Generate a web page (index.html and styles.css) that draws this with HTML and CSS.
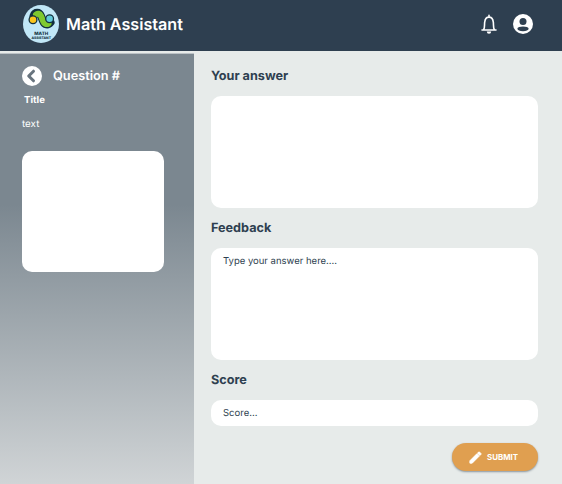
FILE: index.html
```html
<!DOCTYPE html>
<html lang="en">
<head>
<meta charset="utf-8">
<title>Math Assistant</title>
<link rel="stylesheet" href="styles.css">
</head>
<body>
<header class="topbar">
  <svg class="logo" viewBox="0 0 36 38" role="img">
    <ellipse cx="18" cy="19" rx="18" ry="19" fill="#c1e7f7"/>
    <path d="M10.5 11C12 6.8 16.3 6.8 18 11L20 16C21.5 20 25 20.5 27.5 17.5" fill="none" stroke="#12303e" stroke-width="8" stroke-linecap="round"/>
    <path d="M13 9.5C14.5 8 16.8 8.5 18 11L20 16C21 18.7 23.3 19.7 25.5 18.5" fill="none" stroke="#7fc92f" stroke-width="6" stroke-linecap="round"/>
    <circle cx="10" cy="14.8" r="3.9" fill="#fbc51b" stroke="#12303e" stroke-width="1.3"/>
    <circle cx="26.6" cy="13.7" r="3.9" fill="#62cbdc" stroke="#12303e" stroke-width="1.3"/>
    <text x="18.2" y="29.6" class="logo-math" text-anchor="middle" textLength="14">MATH</text>
    <text x="18.2" y="34.2" class="logo-sub" text-anchor="middle" textLength="19.5">ASSISTANT</text>
  </svg>
  <h1 class="brand">Math Assistant</h1>
  <svg class="bell" viewBox="0 0 16 20">
    <path d="M1 16H15M2.7 15.5C3.9 13.5 3.3 10.8 3.7 8.2C4 5 5.6 3.1 8 3.1S12 5 12.3 8.2C12.7 10.8 12.1 13.5 13.3 15.5M8 2.8V1.2" fill="none" stroke="#fff" stroke-width="1.6" stroke-linecap="round"/>
    <path d="M5.8 17.6H10.2A2.2 2.2 0 0 1 5.8 17.6Z" fill="#fff"/>
  </svg>
  <svg class="user" viewBox="0 0 20 20">
    <circle cx="10" cy="10" r="10" fill="#fff"/>
    <circle cx="10" cy="7.5" r="3.5" fill="#2e3f50"/>
    <ellipse cx="10" cy="14.8" rx="5.6" ry="2.4" fill="#2e3f50"/>
  </svg>
</header>
<div class="layout">
  <aside class="sidebar">
    <div class="question">
      <svg class="back" viewBox="0 0 20 20">
        <circle cx="10" cy="10" r="10" fill="#fff"/>
        <path d="M11.5 5.2L6.7 10L11.5 14.8" fill="none" stroke="#68747e" stroke-width="3" stroke-linecap="round" stroke-linejoin="round"/>
      </svg>
      <h2 class="heading heading-light">Question #</h2>
    </div>
    <h3 class="title">Title</h3>
    <p class="text">text</p>
    <div class="figure"></div>
  </aside>
  <main class="content">
    <h2 class="heading">Your answer</h2>
    <div class="box"></div>
    <h2 class="heading">Feedback</h2>
    <div class="box">Type your answer here....</div>
    <h2 class="heading">Score</h2>
    <div class="box box-line">Score...</div>
    <button class="submit">
      <svg class="pencil" viewBox="0 0 24 24"><path d="M3 17.25V21h3.75L17.81 9.94l-3.75-3.75L3 17.25zM20.71 7.04a1 1 0 0 0 0-1.41l-2.34-2.34a1 1 0 0 0-1.41 0l-1.83 1.83 3.75 3.75 1.83-1.83z" fill="#fff" stroke="#fff" stroke-width="1.4" stroke-linejoin="round"/></svg>
      <span>SUBMIT</span>
    </button>
  </main>
</div>
</body>
</html>
```
FILE: styles.css
```css
* { box-sizing: border-box; }
body {
  margin: 0;
  height: 484px;
  overflow: hidden;
  background: #e7ebea;
  color: #2e3f50;
  font-family: Inter, sans-serif;
  text-rendering: geometricPrecision;
}
h1, h2, h3, p { margin: 0; }
svg { display: block; flex: none; }
.topbar {
  display: flex;
  align-items: center;
  height: 51px;
  padding: 0 29px 3px 23px;
  background: #2e3f50;
}
.logo { width: 36px; height: 38px; }
.logo-math { font: 800 4.6px Inter, sans-serif; fill: #12303e; }
.logo-sub { font: 800 3.4px Inter, sans-serif; fill: #12303e; }
.brand {
  margin: 0 auto 0 7px;
  color: #fff;
  font-size: 16.15px;
  font-weight: 600;
  line-height: 20px;
}
.bell { width: 16px; height: 20px; margin-right: 16px; }
.user { width: 20px; height: 20px; }
.layout { display: flex; height: 433px; }
.sidebar {
  width: 194px;
  margin-top: 2px;
  padding: 12px 22px 0;
  border-top: 1px solid #bdc3c7;
  background: linear-gradient(#7b8790 0, #7b8790 35%, #d0d4d6 100%);
  color: #fff;
}
.question { display: flex; align-items: center; height: 20px; }
.back { width: 20px; height: 20px; margin-right: 11px; }
.heading {
  height: 20px;
  padding-top: 1px;
  font-size: 12.65px;
  font-weight: 700;
  line-height: 20px;
}
.heading-light { font-size: 12.75px; font-weight: 600; }
.title { margin: 8px 0 0 2px; font-size: 9.6px; font-weight: 700; line-height: 14px; }
.text { margin-top: 10px; font-size: 9.8px; line-height: 14px; }
.figure { width: 142px; height: 121px; margin-top: 19px; border-radius: 10px; background: #fff; }
.content {
  display: flex;
  flex: 1;
  flex-direction: column;
  padding: 15px 24px 0 17px;
}
.box {
  height: 112px;
  margin: 10px 0;
  padding: 7px 12px;
  border-radius: 10px;
  background: #fff;
  font-size: 9.5px;
  line-height: 14px;
}
.box-line { height: 26px; margin-bottom: 17px; }
.submit {
  display: flex;
  align-items: center;
  align-self: flex-end;
  width: 86px;
  height: 28px;
  padding: 0 0 0 16px;
  border: 0;
  border-radius: 14px;
  background: #e09f50;
  box-shadow: 0 1px 2px rgba(46, 63, 80, .5);
  color: #fff;
  font: 700 7.9px Inter, sans-serif;
}
.pencil { width: 15px; height: 15px; margin-right: 4px; }
```
